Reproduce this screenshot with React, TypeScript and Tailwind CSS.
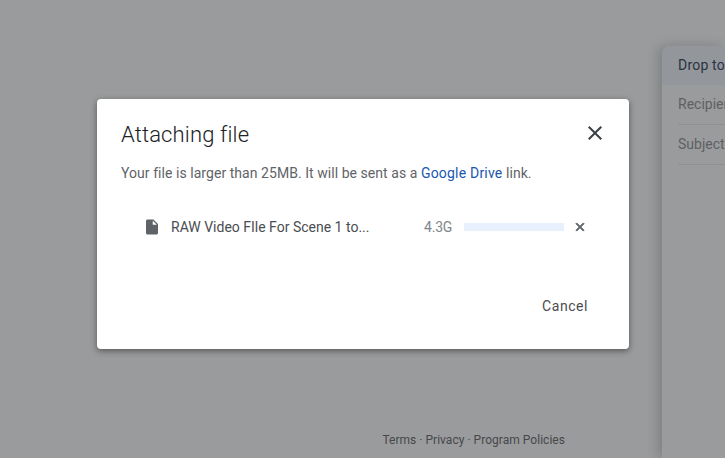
const FONT = "font-['Roboto','Liberation_Sans',sans-serif]";

function ComposePanel() {
  return (
    <div className="w-[63px] h-[412px] mt-[46px] rounded-tl-lg bg-[#9a9b9d] shadow-[-4px_0_12px_rgba(0,0,0,0.18)] overflow-hidden shrink-0">
      <div className="h-[39px] pl-4 flex items-center bg-[#93979c] text-[14px] text-[#2b3342] tracking-[0.2px] whitespace-nowrap">
        Drop to
      </div>
      <div className="ml-4 h-[40px] flex items-center border-b border-[#8f9092] text-[14px] text-[#5f6062] whitespace-nowrap">
        Recipients
      </div>
      <div className="ml-4 h-[40px] flex items-center border-b border-[#8f9092] text-[14px] text-[#5f6062] whitespace-nowrap">
        Subject
      </div>
    </div>
  );
}

function Footer() {
  return (
    <div className="flex-1 flex flex-col justify-end items-end pb-[10px] pr-[97px]">
      <p className="text-[12px] leading-4 tracking-[0.03px] text-[#47484a] whitespace-nowrap">Terms · Privacy · Program Policies</p>
    </div>
  );
}

export default function App() {
  return (
    <div className={`relative w-[725px] h-[458px] overflow-hidden flex bg-[#9a9b9d] ${FONT}`}>
      <Footer />
      <ComposePanel />

      {/* Modal */}
      <div className="absolute left-[97px] top-[99px] w-[532px] h-[250px] rounded-[4px] bg-white shadow-[0_2px_6px_rgba(0,0,0,0.45)] flex flex-col pl-6 pr-[26px]">
        <div className="flex items-center justify-between pt-[21px]">
          <h1 className="text-[22px] leading-[30px] font-light text-[#202124] tracking-[0.15px]">Attaching file</h1>
          <svg width="24" height="24" viewBox="0 0 24 24" fill="#3c4043" className="mr-[-4px] mt-[-4px]">
            <path d="M19 6.41 17.59 5 12 10.59 6.41 5 5 6.41 10.59 12 5 17.59 6.41 19 12 13.41 17.59 19 19 17.59 13.41 12z" />
          </svg>
        </div>

        <p className="mt-[13px] text-[14px] leading-5 text-[#5f6368] tracking-[0.05px] whitespace-nowrap">
          Your file is larger than 25MB. It will be sent as a <span className="text-[#1a57b0] tracking-[0.2px]">Google Drive</span> link.
        </p>

        <div className="mt-[34px] flex items-center pl-[22px]">
          <svg width="18" height="18" viewBox="0 0 24 24" fill="#5f6368" className="shrink-0 mr-[10px]">
            <path d="M14 2H6c-1.1 0-2 .9-2 2v16c0 1.100.9 2 2 2h12c1.100 0 2-.9 2-2V8l-6-6zm-1 7V3.500L18.500 9H13z" />
          </svg>
          <span className="w-[253px] text-[14px] leading-5 text-[#4a4d51] whitespace-nowrap">RAW Video FIle For Scene 1 to...</span>
          <span className="w-[40px] text-[14px] leading-5 text-[#80868b] tracking-[-0.2px]">4.3G</span>
          <div className="w-[100px] h-2 bg-[#e8f0fe]" />
          <svg width="14" height="14" viewBox="0 0 24 24" fill="#5f6368" stroke="#5f6368" strokeWidth="1.5" className="ml-[9px]">
            <path d="M19 6.410 17.590 5 12 10.590 6.410 5 5 6.410 10.590 12 5 17.590 6.410 19 12 13.410 17.590 19 19 17.590 13.410 12z" />
          </svg>
        </div>

        <div className="mt-auto mb-[33px] flex justify-end">
          <button className="text-[14px] leading-5 tracking-[0.55px] text-[#4a4c4f] mr-[15px]">Cancel</button>
        </div>
      </div>
    </div>
  );
}
